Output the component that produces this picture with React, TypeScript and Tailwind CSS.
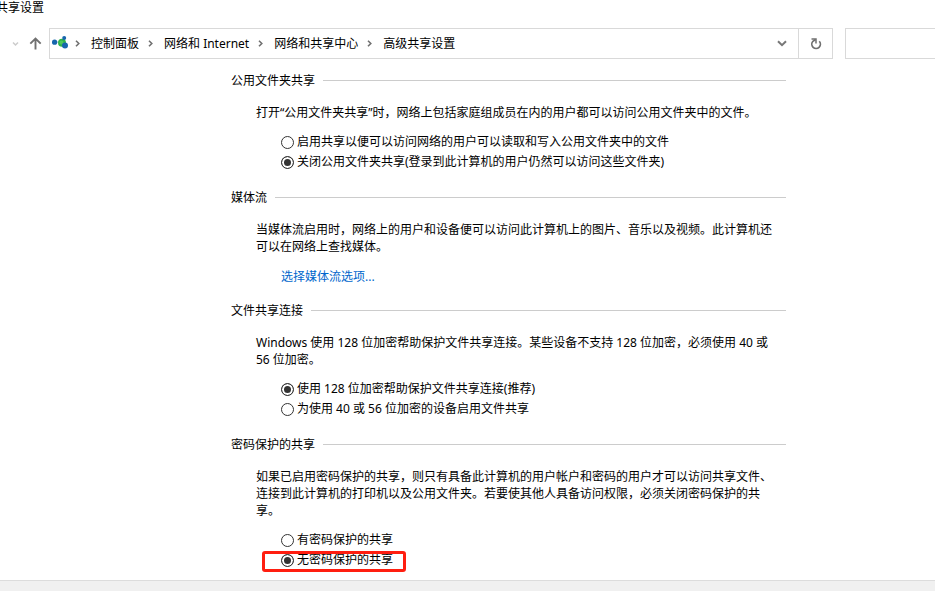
import { useState } from "react";
import type { ReactNode } from "react";

const crumbs = ["控制面板", "网络和 Internet", "网络和共享中心", "高级共享设置"];

const NetworkIcon = () => (
  <svg className="mr-[5px] h-4 w-[18px] shrink-0" viewBox="0 0 18 16" aria-hidden="true">
    <path d="M3 6h7l2-4M10 6l3 4" stroke="#a9cbe4" strokeWidth="1" fill="none" />
    <circle cx="10" cy="6.800" r="4" fill="#2fb34a" />
    <circle cx="9.500" cy="6.500" r="2" fill="#4fc95a" />
    <circle cx="2.600" cy="6.200" r="2.600" fill="#1766ad" />
    <circle cx="12.200" cy="2" r="2" fill="#1766ad" />
    <circle cx="13" cy="9.600" r="3" fill="#1766ad" />
  </svg>
);

const CrumbArrow = () => (
  <svg className="mr-[11px] h-[7px] w-[5px] shrink-0" viewBox="0 0 5 7" aria-hidden="true">
    <path d="M1 .7 3.800 3.500 1 6.300" fill="none" stroke="#707070" strokeWidth="1.600" />
  </svg>
);

const TopBar = () => (
  <nav className="flex h-[31px] items-stretch">
    <div className="flex w-[49px] shrink-0 items-center gap-2.5 pl-3">
      <button type="button" aria-label="最近的位置" className="flex w-[7px] justify-center">
        <svg className="h-1.5 w-[7px]" viewBox="0 0 7 6">
          <path d="M1 1.500 3.500 4 6 1.500" fill="none" stroke="#ccc" strokeWidth="1.500" />
        </svg>
      </button>
      <button type="button" aria-label="向上">
        <svg className="h-[13px] w-[13px]" viewBox="0 0 13 13">
          <path d="M6.500 12.500V1.500M1.300 6.700l5.200-5.200 5.200 5.200" fill="none" stroke="#707070" strokeWidth="1.900" />
        </svg>
      </button>
    </div>
    <div className="flex min-w-0 flex-1 items-center border border-[#d9d9d9] pl-0.5">
      <NetworkIcon />
      {crumbs.map((crumb) => (
        <div key={crumb} className="flex shrink-0 items-center pr-[9px]">
          <CrumbArrow />
          <a href="#" className="whitespace-nowrap">{crumb}</a>
        </div>
      ))}
      <button type="button" aria-label="展开地址" className="ml-auto flex h-full w-[34px] items-center justify-center border-r border-[#d9d9d9]">
        <svg className="h-[7px] w-[10px]" viewBox="0 0 10 7">
          <path d="M1 1.200 5 5.200 9 1.200" fill="none" stroke="#777" strokeWidth="2" />
        </svg>
      </button>
      <button type="button" aria-label="刷新" className="flex h-full w-[33px] items-center justify-center">
        <svg className="h-3 w-3" viewBox="0 0 12 12">
          <path d="M9.300 3.300A4.300 4.300 0 1 1 2.900 3.300L5.600 1.500" fill="none" stroke="#707070" strokeWidth="1.700" />
          <path d="M1.500 1H6V5.500" fill="none" stroke="#707070" strokeWidth="1.500" />
        </svg>
      </button>
    </div>
    <input type="search" aria-label="搜索" className="ml-3 w-[90px] shrink-0 border border-r-0 border-[#d9d9d9] px-2 outline-none" />
  </nav>
);

const Section = ({ title, text, children }: { title: string; text: string; children: ReactNode }) => (
  <section className="pb-[17px]">
    <div className="flex items-center gap-2">
      <h2>{title}</h2>
      <div className="h-px flex-1 bg-[#ccc]" />
    </div>
    <p className="mt-[15px] mr-2 mb-[11px] ml-[25px]">{text}</p>
    <div className="ml-[50px] flex flex-col items-start">{children}</div>
  </section>
);

interface OptionsProps {
  name: string;
  options: string[];
  initial: number;
  marked?: number;
}

const Options = ({ name, options, initial, marked }: OptionsProps) => {
  const [selected, setSelected] = useState(initial);

  return (
    <>
      {options.map((option, i) => (
        <label key={option} className="relative flex h-5 items-center gap-[3px] whitespace-nowrap">
          <input
            type="radio"
            name={name}
            checked={selected === i}
            onChange={() => setSelected(i)}
            className="h-[13px] w-[13px] shrink-0 appearance-none rounded-full border border-[#333] bg-white checked:bg-[#333] checked:shadow-[inset_0_0_0_2px_white]"
          />
          <span className="pb-0.5">{option}</span>
          {marked === i && (
            <span className="pointer-events-none absolute top-px -right-[13px] -left-[19px] h-[21px] rounded-[3px] border-[3px] border-[#ff1e10]" />
          )}
        </label>
      ))}
    </>
  );
};

const App = () => (
  <div className="flex min-h-screen flex-col overflow-hidden bg-white font-['Noto_Sans','Noto_Sans_CJK_SC',sans-serif] text-[12px] leading-[17px] text-black">
    <h1 className="-ml-1 h-7 leading-4">共享设置</h1>
    <TopBar />

    <main className="mt-[13px] mr-[149px] mb-auto ml-[231px]">
      <Section
        title="公用文件夹共享"
        text="打开“公用文件夹共享”时，网络上包括家庭组成员在内的用户都可以访问公用文件夹中的文件。"
      >
        <Options
          name="public-folder"
          initial={1}
          options={[
            "启用共享以便可以访问网络的用户可以读取和写入公用文件夹中的文件",
            "关闭公用文件夹共享(登录到此计算机的用户仍然可以访问这些文件夹)",
          ]}
        />
      </Section>

      <Section
        title="媒体流"
        text="当媒体流启用时，网络上的用户和设备便可以访问此计算机上的图片、音乐以及视频。此计算机还可以在网络上查找媒体。"
      >
        <a href="#" className="h-[19px] leading-[21px] text-[#0066cc]">选择媒体流选项...</a>
      </Section>

      <Section
        title="文件共享连接"
        text="Windows 使用 128 位加密帮助保护文件共享连接。某些设备不支持 128 位加密，必须使用 40 或 56 位加密。"
      >
        <Options
          name="encryption"
          initial={0}
          options={["使用 128 位加密帮助保护文件共享连接(推荐)", "为使用 40 或 56 位加密的设备启用文件共享"]}
        />
      </Section>

      <Section
        title="密码保护的共享"
        text="如果已启用密码保护的共享，则只有具备此计算机的用户帐户和密码的用户才可以访问共享文件、连接到此计算机的打印机以及公用文件夹。若要使其他人具备访问权限，必须关闭密码保护的共享。"
      >
        <Options name="password" initial={1} marked={1} options={["有密码保护的共享", "无密码保护的共享"]} />
      </Section>
    </main>

    <footer className="-mt-2 h-[11px] border-t border-[#dcdcdc] bg-[#f0f0f0]" />
  </div>
);

export default App;
